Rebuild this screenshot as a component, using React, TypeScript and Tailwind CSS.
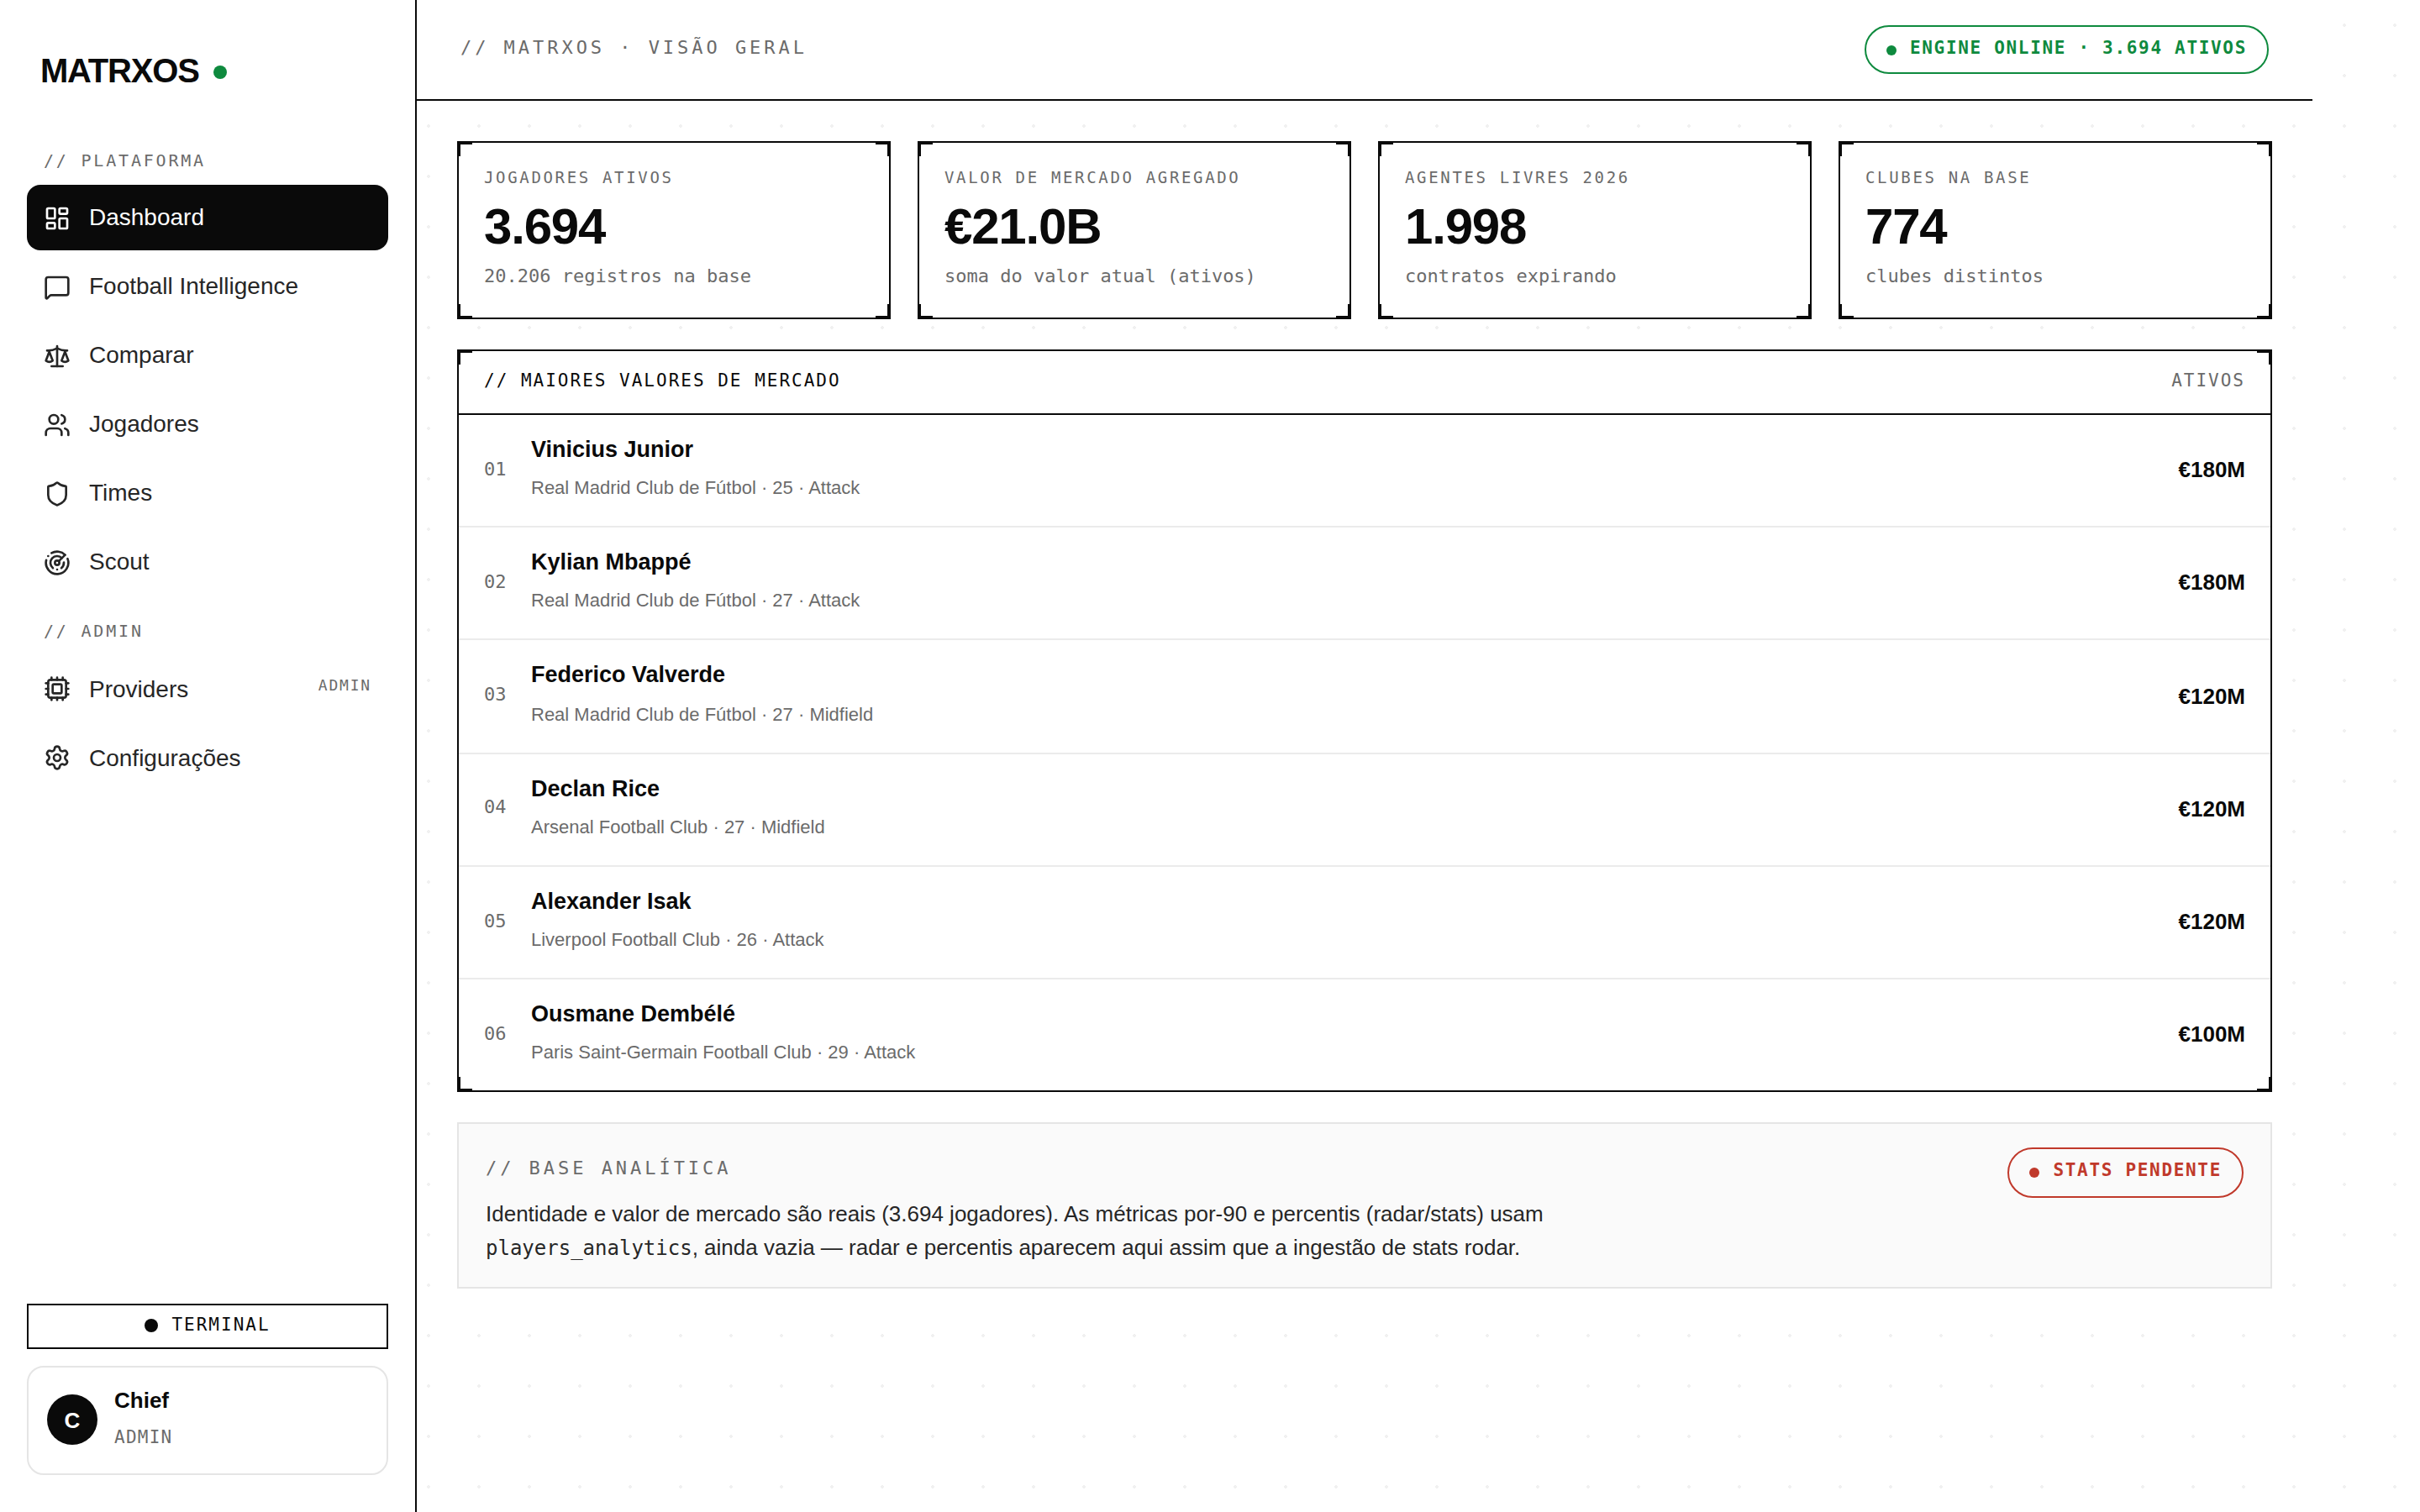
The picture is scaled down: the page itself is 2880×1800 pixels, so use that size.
import React from "react";
import {
  Cpu,
  LayoutDashboard,
  MessageSquare,
  Radar,
  Scale,
  Settings,
  Shield,
  Users,
  type LucideIcon,
} from "lucide-react";

const MONO = "font-['DejaVu_Sans_Mono',monospace]";

type NavEntry = { label: string; icon: LucideIcon; active?: boolean; badge?: string };

const platform: NavEntry[] = [
  { label: "Dashboard", icon: LayoutDashboard, active: true },
  { label: "Football Intelligence", icon: MessageSquare },
  { label: "Comparar", icon: Scale },
  { label: "Jogadores", icon: Users },
  { label: "Times", icon: Shield },
  { label: "Scout", icon: Radar },
];

const admin: NavEntry[] = [
  { label: "Providers", icon: Cpu, badge: "ADMIN" },
  { label: "Configurações", icon: Settings },
];

const kpis = [
  { label: "JOGADORES ATIVOS", value: "3.694", note: "20.206 registros na base" },
  { label: "VALOR DE MERCADO AGREGADO", value: "€21.0B", note: "soma do valor atual (ativos)" },
  { label: "AGENTES LIVRES 2026", value: "1.998", note: "contratos expirando" },
  { label: "CLUBES NA BASE", value: "774", note: "clubes distintos" },
];

type Player = {
  rank: string;
  name: string;
  meta: string;
  value: string;
  row?: string;
  rankGap?: string;
  metaGap?: string;
  valueGap?: string;
};

const players: Player[] = [
  { rank: "01", name: "Vinicius Junior", meta: "Real Madrid Club de Fútbol · 25 · Attack", value: "€180M" },
  { rank: "02", name: "Kylian Mbappé", meta: "Real Madrid Club de Fútbol · 27 · Attack", value: "€180M" },
  {
    rank: "03",
    name: "Federico Valverde",
    meta: "Real Madrid Club de Fútbol · 27 · Midfield",
    value: "€120M",
    row: "h-[136px]",
    metaGap: "mt-5",
    valueGap: "pt-[52px]",
  },
  { rank: "04", name: "Declan Rice", meta: "Arsenal Football Club · 27 · Midfield", value: "€120M", rankGap: "pt-[50px]" },
  { rank: "05", name: "Alexander Isak", meta: "Liverpool Football Club · 26 · Attack", value: "€120M" },
  { rank: "06", name: "Ousmane Dembélé", meta: "Paris Saint-Germain Football Club · 29 · Attack", value: "€100M" },
];

function NavItem({ entry, iconShift }: { entry: NavEntry; iconShift: string }) {
  const Icon = entry.icon;
  return (
    <a
      className={`flex h-[78px] items-start gap-[22px] rounded-2xl px-5 pt-[23px] text-[28px] leading-[31px] ${
        entry.active ? "bg-[#0a0a0a] text-white" : "text-[#262626]"
      }`}
    >
      <Icon className={`size-8 shrink-0 ${iconShift}`} strokeWidth={2} />
      <span className="flex-1">{entry.label}</span>
      {entry.badge && (
        <span className={`${MONO} text-[18px] leading-[21px] tracking-[0.1em] text-[#6b6b6b]`}>{entry.badge}</span>
      )}
    </a>
  );
}

function Corners() {
  return (
    <>
      <i className="absolute -top-0.5 -left-0.5 size-[18px] border-t-4 border-l-4 border-[#0a0a0a]" />
      <i className="absolute -top-0.5 -right-0.5 size-[18px] border-t-4 border-r-4 border-[#0a0a0a]" />
      <i className="absolute -bottom-0.5 -left-0.5 size-[18px] border-b-4 border-l-4 border-[#0a0a0a]" />
      <i className="absolute -right-0.5 -bottom-0.5 size-[18px] border-r-4 border-b-4 border-[#0a0a0a]" />
    </>
  );
}

function Pill({ tone, children }: { tone: string; children: React.ReactNode }) {
  return (
    <div className={`${MONO} flex shrink-0 items-start gap-4 rounded-full border-2 px-6 ${tone}`}>
      <span className="mt-[22px] size-3 rounded-full bg-current" />
      <span className="mt-[13px] text-[21px] leading-6 font-bold tracking-[0.08em] whitespace-nowrap">{children}</span>
    </div>
  );
}

export default function App() {
  return (
    <div className="flex h-[1800px] w-full bg-white bg-[radial-gradient(circle,rgba(10,10,10,0.06)_2px,transparent_2px)] bg-[size:60px_60px] font-['Liberation_Sans',Arial,sans-serif] text-[#0a0a0a]">
      <aside className="flex w-[494px] shrink-0 flex-col bg-white px-8 pt-[62px] pb-11">
        <div className="flex items-start gap-[17.4px] pl-4">
          <span className="text-[40px] leading-[44px] font-bold tracking-[-0.03em]">MATRXOS</span>
          <span className="mt-4 size-4 rounded-full bg-[#0e8a3e]" />
        </div>

        <div className={`${MONO} mt-[73px] mb-[17px] pl-5 text-[20px] leading-6 tracking-[0.14em] text-[#6b6b6b]`}>
          // PLATAFORMA
        </div>
        <nav className="flex flex-col gap-1">
          {platform.map((e) => (
            <NavItem key={e.label} entry={e} iconShift="mt-px" />
          ))}
        </nav>

        <div className={`${MONO} mt-[31px] mb-[19px] pl-5 text-[20px] leading-6 tracking-[0.14em] text-[#6b6b6b]`}>
          // ADMIN
        </div>
        <nav className="flex flex-col gap-1">
          {admin.map((e) => (
            <NavItem key={e.label} entry={e} iconShift="-mt-px" />
          ))}
        </nav>

        <div className="mt-auto flex flex-col gap-5">
          <button className="flex h-[54px] items-start justify-center gap-4 border-2 border-[#0a0a0a] bg-white">
            <span className="mt-4 size-4 rounded-full bg-[#0a0a0a]" />
            <span className={`${MONO} mt-[11px] text-[21px] leading-6 tracking-[2px]`}>TERMINAL</span>
          </button>
          <div className="flex h-[130px] items-start gap-5 rounded-[20px] border-2 border-[#e5e5e5] bg-white px-[22px]">
            <span className="mt-8 flex size-[60px] items-center justify-center rounded-full bg-[#0a0a0a] pt-0.5 text-[26px] leading-8 font-bold text-white">
              C
            </span>
            <div className="flex flex-col pt-6">
              <span className="text-[26px] leading-[30px] font-bold">Chief</span>
              <span className={`${MONO} mt-[17px] text-[21px] leading-6 tracking-[0.06em] text-[#6b6b6b]`}>ADMIN</span>
            </div>
          </div>
        </div>
      </aside>
      <div className="w-0.5 shrink-0 bg-[#0a0a0a]" />

      <main className="flex w-[2256px] flex-col">
        <header className="flex h-[118px] shrink-0 items-start justify-between bg-white px-[52px]">
          <span className={`${MONO} mt-11 text-[22px] leading-[25px] tracking-[0.18em] text-[#6b6b6b]`}>
            // MATRXOS · VISÃO GERAL
          </span>
          <div className="mt-[30px] flex">
            <Pill tone="h-[58px] border-[#0e8a3e] text-[#0e8a3e]">ENGINE ONLINE · 3.694 ATIVOS</Pill>
          </div>
        </header>
        <div className="h-0.5 shrink-0 bg-[#0a0a0a]" />

        <div className="flex flex-col gap-9 px-12 pt-12">
          <section className="grid grid-cols-4 gap-8">
            {kpis.map((k) => (
              <article
                key={k.label}
                className="relative flex h-[212px] flex-col border-2 border-[#0a0a0a] bg-white px-[30px] pt-[30px]"
              >
                <Corners />
                <span className={`${MONO} text-[19px] leading-[22px] tracking-[0.14em] text-[#6b6b6b]`}>{k.label}</span>
                <span className="mt-3.5 text-[60px] leading-[67px] font-bold tracking-[-0.02em]">{k.value}</span>
                <span className={`${MONO} mt-[13px] text-[22px] leading-[25px] text-[#6b6b6b]`}>{k.note}</span>
              </article>
            ))}
          </section>

          <section className="relative h-[884px] border-2 border-[#0a0a0a] bg-white">
            <Corners />
            <div
              className={`${MONO} flex h-[74px] items-start justify-between px-[30px] pt-[23px] text-[21px] leading-6 tracking-[2px]`}
            >
              <span>// MAIORES VALORES DE MERCADO</span>
              <span className="text-[#6b6b6b]">ATIVOS</span>
            </div>
            <div className="h-0.5 bg-[#0a0a0a]" />
            {players.map((p) => (
              <div
                key={p.rank}
                className={`flex items-start border-b-2 border-[#ebebeb] px-[30px] last:h-[132px] last:border-b-0 ${p.row ?? "h-[134px]"}`}
              >
                <span className={`${MONO} w-14 text-[22px] leading-[25px] text-[#6b6b6b] ${p.rankGap ?? "pt-[52px]"}`}>
                  {p.rank}
                </span>
                <div className="flex flex-1 flex-col pt-[26px]">
                  <span className="text-[27px] leading-[30px] font-bold">{p.name}</span>
                  <span className={`text-[22px] leading-[25px] text-[#6b6b6b] ${p.metaGap ?? "mt-[18px]"}`}>{p.meta}</span>
                </div>
                <span className={`text-[26px] leading-[30px] font-bold ${p.valueGap ?? "pt-[50px]"}`}>{p.value}</span>
              </div>
            ))}
          </section>

          <section className="flex h-[198px] items-start justify-between border-2 border-[#e5e5e5] bg-[#fafafa] px-8">
            <div className="flex flex-col pt-10">
              <span className={`${MONO} text-[22px] leading-[25px] tracking-[0.18em] text-[#6b6b6b]`}>
                // BASE ANALÍTICA
              </span>
              <p className="mt-[22px] text-[26px] leading-10 text-[#262626]">
                Identidade e valor de mercado são reais (3.694 jogadores). As métricas por-90 e percentis (radar/stats) usam
                <br />
                <code className={`${MONO} text-[24px] leading-none`}>players_analytics</code>, ainda vazia — radar e
                percentis aparecem aqui assim que a ingestão de stats rodar.
              </p>
            </div>
            <div className="mt-7 flex">
              <Pill tone="h-[60px] border-[#c0392b] text-[#c0392b]">STATS PENDENTE</Pill>
            </div>
          </section>
        </div>
      </main>
    </div>
  );
}
